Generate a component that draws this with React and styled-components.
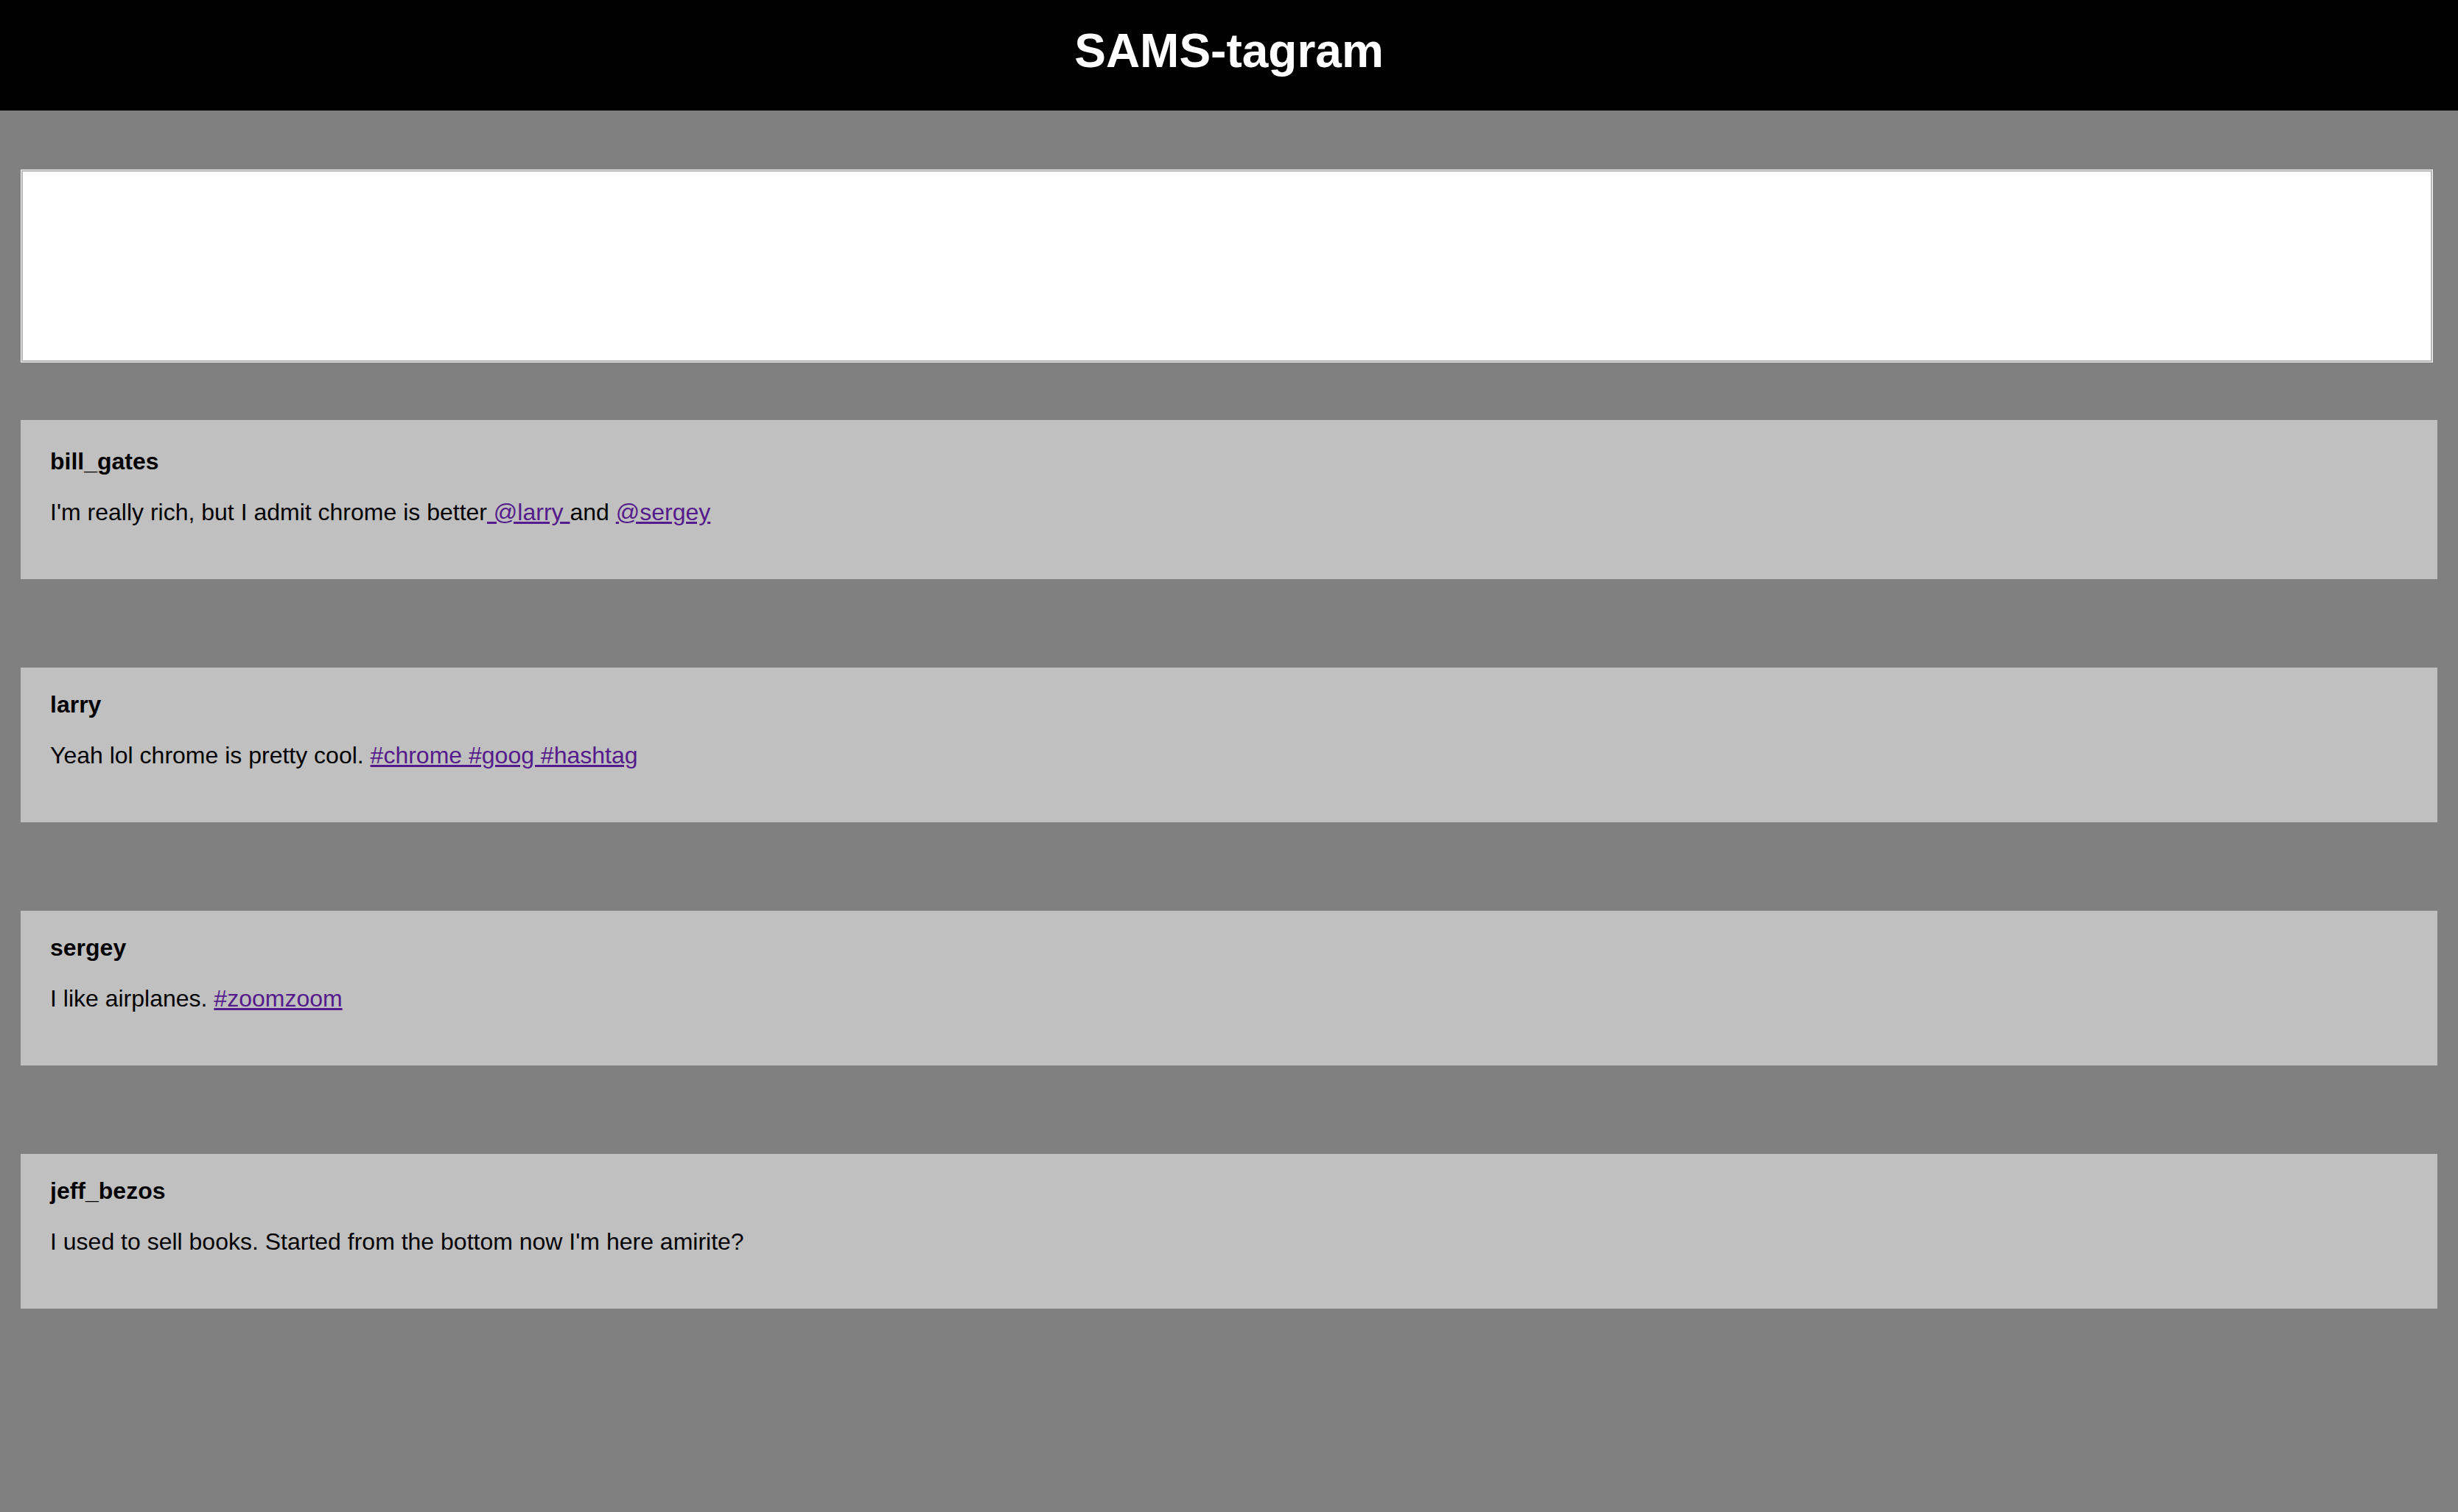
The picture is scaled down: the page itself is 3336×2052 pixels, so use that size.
import styled, { createGlobalStyle } from "styled-components";

const GlobalStyle = createGlobalStyle`
  html, body {
    margin: 0;
    padding: 0;
    background: #808080;
    font-family: "Liberation Sans", Arial, sans-serif;
  }
`;

const posts = [
  {
    user: "bill_gates",
    parts: [
      { text: "I'm really rich, but I admit chrome is better" },
      { link: " @larry " },
      { text: "and " },
      { link: "@sergey" },
    ],
  },
  {
    user: "larry",
    parts: [
      { text: "Yeah lol chrome is pretty cool. " },
      { link: "#chrome #goog #hashtag" },
    ],
  },
  {
    user: "sergey",
    parts: [{ text: "I like airplanes. " }, { link: "#zoomzoom" }],
  },
  {
    user: "jeff_bezos",
    parts: [
      { text: "I used to sell books. Started from the bottom now I'm here amirite?" },
    ],
  },
];

export default function App() {
  return (
    <Page>
      <GlobalStyle />
      <Header>
        <Title>SAMS-tagram</Title>
      </Header>

      <Feed>
        <Composer />

        {posts.map((post, i) => (
          <Post key={post.user} first={i === 0}>
            <Username>{post.user}</Username>
            <Body>
              {post.parts.map((part, j) =>
                part.link ? (
                  <Tag key={j} href="#">
                    {part.link}
                  </Tag>
                ) : (
                  <span key={j}>{part.text}</span>
                )
              )}
            </Body>
          </Post>
        ))}
      </Feed>
    </Page>
  );
}

const Page = styled.div`
  min-height: 100vh;
  background: #808080;
`;

const Header = styled.header`
  box-sizing: border-box;
  height: 150px;
  padding-top: 32px;
  background: #000;
  display: flex;
  justify-content: center;
  align-items: flex-start;
`;

const Title = styled.h1`
  margin: 0;
  color: #fff;
  font-size: 64px;
  font-weight: bold;
  line-height: normal;
`;

const Feed = styled.main`
  display: flex;
  flex-direction: column;
  padding: 80px 28px 120px;
`;

const Composer = styled.div`
  box-sizing: border-box;
  width: calc(100% - 6px);
  height: 262px;
  margin-bottom: 78px;
  background: #fff;
  border: 1px solid #f2f2f2;
  box-shadow: inset 0 0 0 2px #b9b9b9;
`;

const Post = styled.section`
  background: #c0c0c0;
  padding: ${(p) => (p.first ? "38px" : "32px")} 40px 40px;
  margin-bottom: 120px;
  color: #000;
`;

const Username = styled.div`
  font-size: 32px;
  font-weight: bold;
  line-height: 37px;
  margin-bottom: 32px;
`;

const Body = styled.p`
  margin: 0 0 32px;
  font-size: 32px;
  line-height: 37px;
`;

const Tag = styled.a`
  color: #551a8b;
  text-decoration: underline;
`;
